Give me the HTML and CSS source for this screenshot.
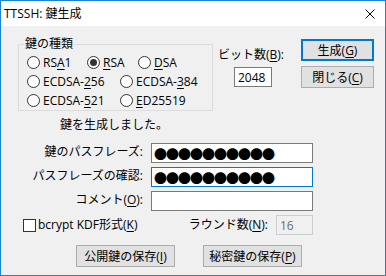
FILE: index.html
```html
<!DOCTYPE html>
<html lang="ja">
<head>
    <meta charset="UTF-8">
    <title>TTSSH: 鍵生成</title>
    <link rel="stylesheet" href="styles.css">
</head>
<body>
    <div class="window">
        <div class="titlebar">
            <span class="title">TTSSH: 鍵生成</span>
            <span class="close">
                <svg width="10" height="10" viewBox="0 0 10 10"><path d="M0.5 0.5L9.5 9.5M9.5 0.5L0.5 9.5" stroke="#000" stroke-width="1" fill="none"/></svg>
            </span>
        </div>
        <div class="client">
            <div class="top">
                <fieldset class="keytype">
                    <legend>鍵の種類</legend>
                    <div class="radio-row">
                        <label class="radio w60"><span class="circle"></span>RS<u>A</u>1</label>
                        <label class="radio w51"><span class="circle checked"></span><u>R</u>SA</label>
                        <label class="radio"><span class="circle"></span><u>D</u>SA</label>
                    </div>
                    <div class="radio-row">
                        <label class="radio w93"><span class="circle"></span>ECDSA-<u>2</u>56</label>
                        <label class="radio"><span class="circle"></span>ECDSA-<u>3</u>84</label>
                    </div>
                    <div class="radio-row">
                        <label class="radio w93"><span class="circle"></span>ECDSA-<u>5</u>21</label>
                        <label class="radio"><span class="circle"></span><u>E</u>D25519</label>
                    </div>
                </fieldset>
                <div class="bits">
                    <div>ビット数(<u>B</u>):</div>
                    <input class="edit bits-input" type="text" value="2048">
                </div>
                <div class="actions">
                    <button class="btn default">生成(<u>G</u>)</button>
                    <button class="btn">閉じる(<u>C</u>)</button>
                </div>
            </div>

            <div class="status">鍵を生成しました。</div>

            <div class="form">
                <label class="field-label">鍵のパスフレーズ:</label>
                <input class="edit pass" type="text" value="●●●●●●●●●●">
                <label class="field-label">パスフレーズの確認:</label>
                <input class="edit pass focus" type="text" value="●●●●●●●●●●">
                <label class="field-label">コメント(<u>O</u>):</label>
                <input class="edit" type="text" value="">
            </div>

            <div class="kdf">
                <label class="check"><span class="box"></span>bcrypt KDF形式(<u>K</u>)</label>
                <div class="rounds">
                    <span>ラウンド数(<u>N</u>):</span>
                    <input class="edit rounds-input" type="text" value="16" disabled>
                </div>
            </div>

            <div class="save">
                <button class="btn wide">公開鍵の保存(<u>I</u>)</button>
                <button class="btn wide">秘密鍵の保存(<u>P</u>)</button>
            </div>
        </div>
    </div>
</body>
</html>
```
FILE: styles.css
```css
body {
    margin: 0;
    font-family: "Open Sans", "Noto Sans CJK JP", sans-serif;
    font-size: 12px;
    line-height: 16px;
    color: #000;
}
.window {
    width: 386px;
    height: 276px;
    box-sizing: border-box;
    border: 1px solid #1883d7;
    background-color: #f0f0f0;
    display: flex;
    flex-direction: column;
}
.titlebar {
    height: 25px;
    flex: none;
    background-color: #fff;
    display: flex;
    align-items: center;
    justify-content: space-between;
    padding: 0 10px 0 3px;
}
.close svg {
    display: block;
}
u {
    text-decoration: underline;
    text-underline-offset: 2px;
}

/* top part: key type + bits + buttons */
.top {
    display: flex;
    margin-top: 10px;
    padding: 0 11px 0 17px;
}
.keytype {
    width: 195px;
    box-sizing: border-box;
    margin: 0;
    border: 1px solid #dcdcdc;
    padding: 1px 0 0 5px;
}
.keytype legend {
    padding: 0 1px;
    line-height: 16px;
}
.radio-row {
    display: flex;
    align-items: center;
    height: 19px;
    padding-left: 3px;
}
.radio {
    display: flex;
    align-items: center;
    white-space: nowrap;
}
.w60 { width: 60px; }
.w51 { width: 51px; }
.w93 { width: 93px; }
.circle {
    width: 13px;
    height: 13px;
    box-sizing: border-box;
    border: 1px solid #333;
    border-radius: 50%;
    background-color: #fff;
    margin-right: 3px;
    display: flex;
    align-items: center;
    justify-content: center;
}
.circle.checked::after {
    content: "";
    width: 7px;
    height: 7px;
    border-radius: 50%;
    background-color: #333;
}
.bits {
    margin-left: 5px;
    padding-top: 11px;
}
.edit {
    box-sizing: border-box;
    height: 20px;
    border: 1px solid #7a7a7a;
    background-color: #fff;
    padding: 0 3px;
    margin: 0;
    font-family: "Open Sans", "Noto Sans CJK JP", sans-serif;
    font-size: 12px;
    color: #000;
    outline: none;
}
.bits-input {
    display: block;
    width: 38px;
    margin: 4px 0 0 16px;
}
.actions {
    margin-left: auto;
    padding-top: 3px;
    display: flex;
    flex-direction: column;
    gap: 5px;
}
.btn {
    width: 73px;
    height: 22px;
    box-sizing: border-box;
    border: 1px solid #adadad;
    background-color: #e1e1e1;
    padding: 0;
    font-family: "Open Sans", "Noto Sans CJK JP", sans-serif;
    font-size: 12px;
    color: #000;
}
.btn.default {
    border-color: #0078d7;
    box-shadow: inset 0 0 0 1px #0078d7;
}
.btn.wide {
    width: 99px;
}

.status {
    margin-top: 6px;
    padding-left: 59px;
}

.form {
    display: grid;
    grid-template-columns: 142px 162px;
    column-gap: 8px;
    row-gap: 4px;
    margin-top: 10px;
}
.field-label {
    text-align: right;
    align-self: center;
    margin-top: -2px;
    white-space: nowrap;
}
.pass {
    font-family: "Noto Sans CJK JP", sans-serif;
    font-size: 13px;
    letter-spacing: -1px;
    padding-left: 2px;
}
.edit.focus {
    border-color: #0078d7;
}

.kdf {
    display: flex;
    align-items: center;
    height: 20px;
    margin-top: 4px;
    padding: 0 72px 0 22px;
}
.check {
    display: flex;
    align-items: center;
    flex: 1;
}
.box {
    width: 13px;
    height: 13px;
    box-sizing: border-box;
    border: 1px solid #333;
    background-color: #fff;
    margin-right: 2px;
}
.rounds {
    display: flex;
    align-items: center;
    gap: 8px;
}
.rounds-input {
    width: 37px;
    border-color: #ccc;
    background-color: #f0f0f0;
    color: #6d6d6d;
}

.save {
    display: flex;
    gap: 28px;
    margin-top: 10px;
    padding-left: 75px;
}
```
